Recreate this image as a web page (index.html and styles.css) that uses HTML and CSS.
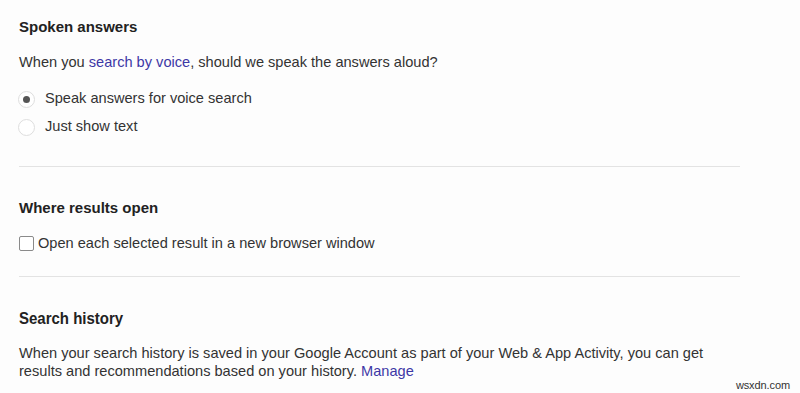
FILE: index.html
```html
<!DOCTYPE html>
<html>
<head>
<meta charset="utf-8">
<link rel="stylesheet" href="styles.css">
</head>
<body>
<div class="page">
  <section class="sec sec-voice">
    <h2 class="title">Spoken answers</h2>
    <p class="desc">When you <a class="link" href="#">search by voice</a>, should we speak the answers aloud?</p>
    <div class="opts">
      <label class="opt"><span class="radio on"></span>Speak answers for voice search</label>
      <label class="opt"><span class="radio"></span>Just show text</label>
    </div>
  </section>
  <section class="sec sec-open">
    <h2 class="title">Where results open</h2>
    <label class="chk-row"><span class="chk"></span>Open each selected result in a new browser window</label>
  </section>
  <section class="sec sec-hist">
    <h2 class="title tall">Search history</h2>
    <p class="hist">When your search history is saved in your Google Account as part of your Web &amp; App Activity, you can get results and recommendations based on your history. <a class="link" href="#">Manage</a></p>
  </section>
</div>
<div class="wm">wsxdn.com</div>
</body>
</html>
```
FILE: styles.css
```css
html, body { margin: 0; padding: 0; background: #fdfdfd; }
body { font-family: "Liberation Sans", Arial, sans-serif; color: #333; width: 800px; height: 393px; overflow: hidden; position: relative; }
.page { padding: 0 60px 0 19px; width: 721px; }
.sec { border-bottom: 1px solid #e3e3e3; }
.sec-voice { padding: 18px 0 30px; }
.sec-open { padding: 32px 0 24px; }
.sec-hist { padding: 32px 0 0; border-bottom: none; }
.title { margin: 0; font-size: 15px; font-weight: bold; line-height: 18px; color: #222; }
.tall { transform: scaleY(1.1); transform-origin: center; }
.desc { margin: 17px 0 0; font-size: 14.6px; line-height: 18px; }
.link { color: #3d38a6; text-decoration: none; }
.opts { margin-top: 18px; display: flex; flex-direction: column; gap: 9px; }
.opt { display: flex; align-items: flex-start; font-size: 14.6px; line-height: 18px; }
.radio { width: 17px; height: 17px; border-radius: 50%; border: 1px solid #dedede; box-sizing: border-box; margin: 2px 10px 0 -1px; display: flex; align-items: center; justify-content: center; background: #fff; flex: none; }
.radio.on::after { content: ""; width: 7px; height: 7px; border-radius: 50%; background: #555; }
.chk-row { margin-top: 17px; display: flex; align-items: flex-start; font-size: 14.6px; line-height: 18px; }
.chk { width: 15px; height: 15px; border: 1px solid #8a8a8a; box-sizing: border-box; border-radius: 2px; margin: 2px 4px 0 0; background: #fff; flex: none; }
.hist { margin: 17px 0 0; font-size: 14.6px; line-height: 18px; }
.wm { position: absolute; right: 10px; top: 379px; font-size: 11px; line-height: 12px; color: #333; letter-spacing: -0.1px; }
```
